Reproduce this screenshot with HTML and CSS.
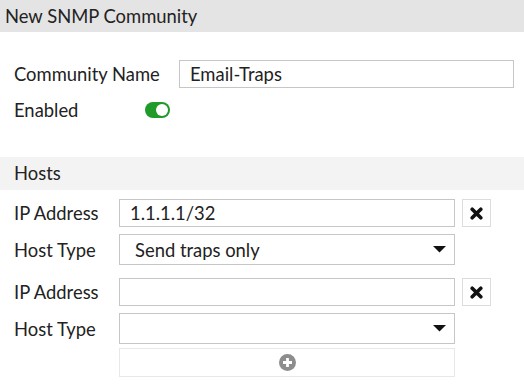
FILE: index.html
```html
<!DOCTYPE html>
<html lang="en">
<head>
    <meta charset="UTF-8">
    <meta name="viewport" content="width=device-width, initial-scale=1.0">
    <title>New SNMP Community</title>
    <link rel="stylesheet" href="styles.css">
</head>
<body>
    <!-- Title Bar -->
    <div class="title-bar">New SNMP Community</div>

    <!-- Community Settings -->
    <div class="settings">
        <div class="row">
            <label class="label-wide">Community Name</label>
            <input class="text-input wide" type="text" value="Email-Traps">
        </div>
        <div class="row toggle-row">
            <label class="label-toggle">Enabled</label>
            <svg class="toggle" width="25" height="16" viewBox="0 0 25 16">
                <rect x="0" y="0" width="25" height="16" rx="8" fill="#1f9a2b"/>
                <circle cx="17" cy="8" r="6" fill="#fff"/>
            </svg>
        </div>
    </div>

    <!-- Hosts -->
    <div class="section-bar">Hosts</div>
    <div class="hosts">
        <div class="host">
            <div class="row">
                <label class="label">IP Address</label>
                <input class="text-input" type="text" value="1.1.1.1/32">
                <button class="remove-btn" aria-label="Remove">
                    <svg width="13" height="13" viewBox="0 0 13 13">
                        <path d="M2.2 2.2 L10.8 10.8 M10.8 2.2 L2.2 10.8" stroke="#111" stroke-width="3.6" stroke-linecap="round"/>
                    </svg>
                </button>
            </div>
            <div class="row">
                <label class="label">Host Type</label>
                <div class="select">
                    <span>Send traps only</span>
                    <svg width="13" height="7" viewBox="0 0 13 7"><path d="M0 0 H13 L6.5 6.5 Z" fill="#111"/></svg>
                </div>
            </div>
        </div>
        <div class="host">
            <div class="row">
                <label class="label">IP Address</label>
                <input class="text-input" type="text" value="">
                <button class="remove-btn" aria-label="Remove">
                    <svg width="13" height="13" viewBox="0 0 13 13">
                        <path d="M2.2 2.2 L10.8 10.8 M10.8 2.2 L2.2 10.8" stroke="#111" stroke-width="3.6" stroke-linecap="round"/>
                    </svg>
                </button>
            </div>
            <div class="row">
                <label class="label">Host Type</label>
                <div class="select">
                    <span></span>
                    <svg width="13" height="7" viewBox="0 0 13 7"><path d="M0 0 H13 L6.5 6.5 Z" fill="#111"/></svg>
                </div>
            </div>
        </div>
        <div class="row add-row">
            <button class="add-btn" aria-label="Add host">
                <svg width="17" height="17" viewBox="0 0 17 17">
                    <circle cx="8.5" cy="8.5" r="8.5" fill="#8d8d8d"/>
                    <path d="M8.5 4 V13 M4 8.5 H13" stroke="#fff" stroke-width="2.8"/>
                </svg>
            </button>
        </div>
    </div>
</body>
</html>
```

FILE: styles.css
```css
/* Basic Reset */
* {
    box-sizing: border-box;
    margin: 0;
    padding: 0;
}
body {
    font-family: Lato, "Open Sans", sans-serif;
    font-size: 18.4px;
    color: #222;
    background: #fff;
}
/* Title Bar */
.title-bar {
    height: 32px;
    line-height: 32px;
    padding-left: 5px;
    background-color: #e4e4e4;
}
/* Community Settings */
.settings {
    padding: 28px 10px 0 14px;
}
.row {
    display: flex;
    align-items: center;
}
.label-wide {
    width: 165px;
}
.label-toggle {
    width: 131px;
}
.label {
    width: 105px;
}
.toggle-row {
    height: 28px;
    margin-top: 8px;
}
.text-input {
    height: 28px;
    width: 336px;
    border: 1px solid #c6c6c6;
    padding: 0 10px;
    font-family: inherit;
    font-size: 18.4px;
    color: #222;
    outline: none;
}
.text-input.wide {
    width: 335px;
}
/* Hosts */
.section-bar {
    margin-top: 33px;
    height: 33px;
    line-height: 32px;
    padding-left: 14px;
    background-color: #f3f3f3;
}
.hosts {
    padding: 9px 0 0 14px;
}
.host {
    display: flex;
    flex-direction: column;
    gap: 7px;
    margin-bottom: 13px;
}
.host:nth-child(2) {
    margin-bottom: 4px;
}
.remove-btn {
    margin-left: 7px;
    width: 29px;
    height: 28px;
    border: 1px solid #dcdcdc;
    background: #fff;
    display: flex;
    align-items: center;
    justify-content: center;
}
.select {
    width: 336px;
    height: 31px;
    border: 1px solid #c6c6c6;
    padding: 0 8px 0 15px;
    display: flex;
    align-items: center;
    justify-content: space-between;
}
.add-row {
    padding-left: 105px;
}
.add-btn {
    width: 336px;
    height: 29px;
    border: 1px solid #e8e8e8;
    background: #fff;
    display: flex;
    align-items: center;
    justify-content: center;
}
```
